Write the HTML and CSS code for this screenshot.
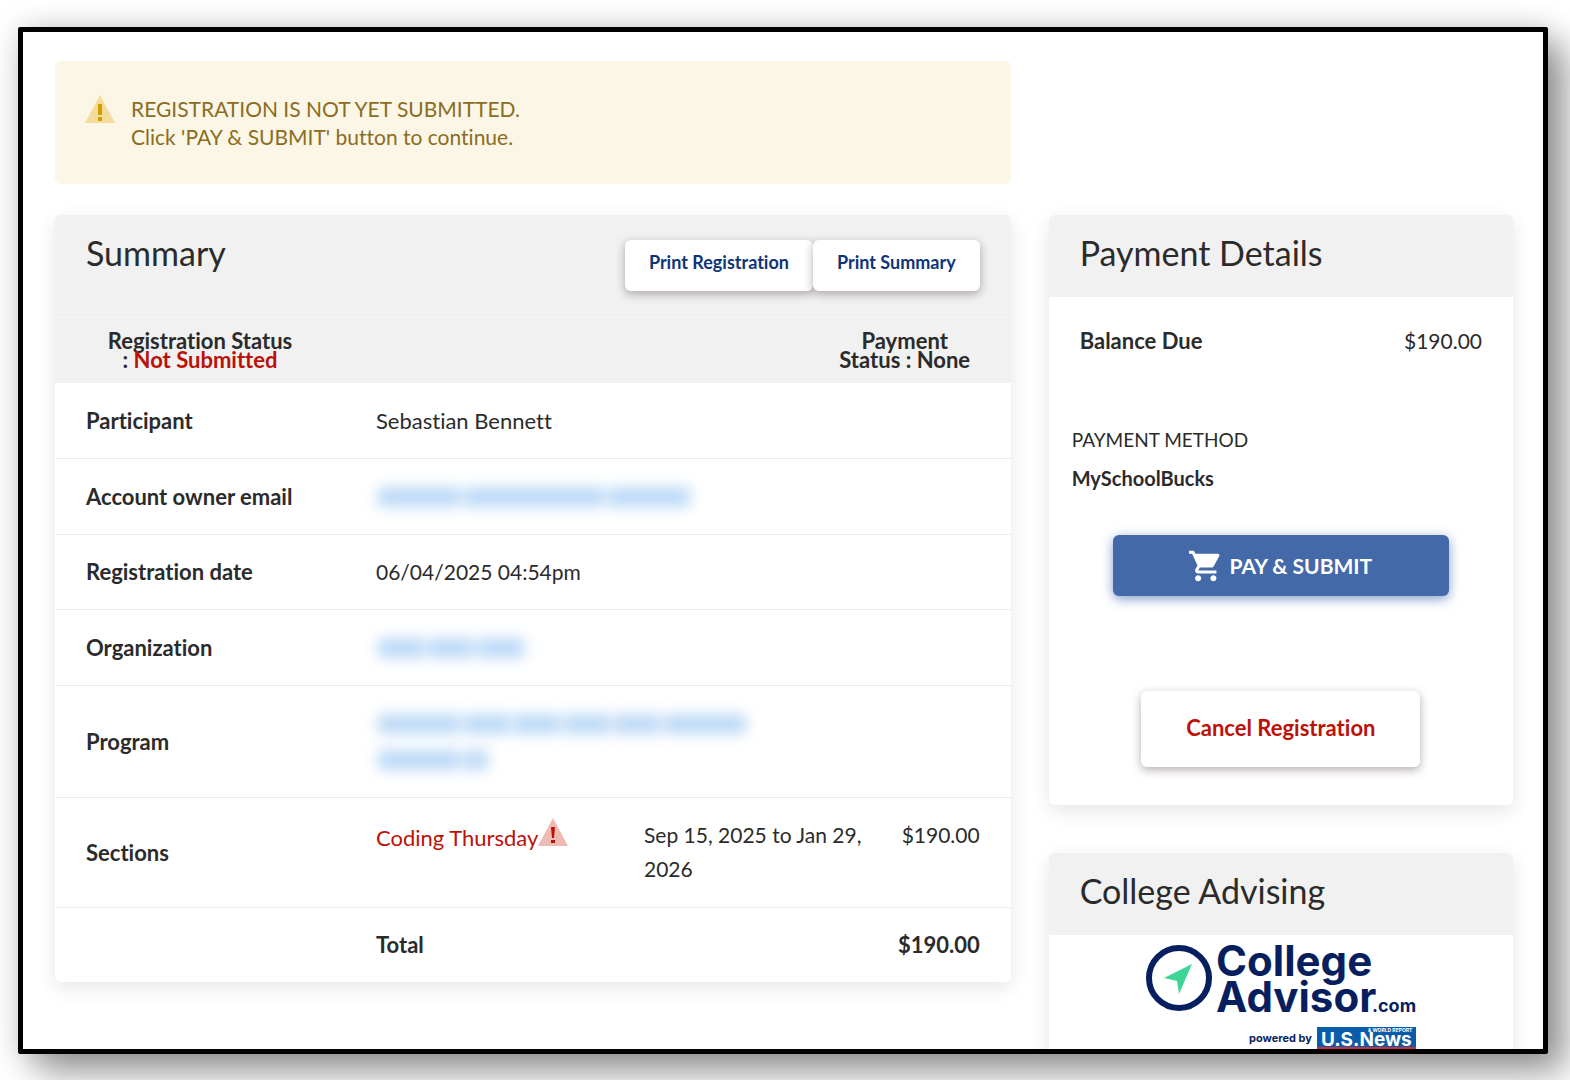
FILE: index.html
```html
<!DOCTYPE html>
<html lang="en">
<head>
    <meta charset="UTF-8">
    <meta name="viewport" content="width=device-width, initial-scale=1.0">
    <title>Registration Summary</title>
    <link rel="stylesheet" href="styles.css">
</head>
<body>
    <div class="frame">
        <div class="alert" role="alert">
            <svg class="warning-icon" viewBox="0 0 30 28" width="30" height="28" aria-hidden="true">
                <path class="warning-shape" d="M15 0L30 28H0z"/>
                <path class="warning-mark" d="M13 9h4v11h-4zM13 22h4v4h-4z"/>
            </svg>
            <p>REGISTRATION IS NOT YET SUBMITTED.<br>Click 'PAY &amp; SUBMIT' button to continue.</p>
        </div>

        <main class="card summary">
            <div class="card-header summary-header">
                <h2>Summary</h2>
                <div class="print-buttons">
                    <button type="button" class="btn btn-print">Print Registration</button>
                    <button type="button" class="btn btn-print">Print Summary</button>
                </div>
            </div>
            <div class="status-row">
                <div class="status status-registration">Registration Status : <span class="red">Not Submitted</span></div>
                <div class="status status-payment">Payment Status : None</div>
            </div>
            <table class="summary-table">
                <colgroup>
                    <col class="col-label">
                    <col class="col-name">
                    <col class="col-dates">
                    <col class="col-price">
                </colgroup>
                <tbody>
                    <tr>
                        <th scope="row">Participant</th>
                        <td colspan="3">Sebastian Bennett</td>
                    </tr>
                    <tr>
                        <th scope="row">Account owner email</th>
                        <td colspan="3"><div class="hidden-line"><i class="w80"></i><i class="w140"></i><i class="w80"></i></div></td>
                    </tr>
                    <tr>
                        <th scope="row">Registration date</th>
                        <td colspan="3" class="num">06/04/2025 04:54pm</td>
                    </tr>
                    <tr>
                        <th scope="row">Organization</th>
                        <td colspan="3"><div class="hidden-line"><i class="w44"></i><i class="w44"></i><i class="w44"></i></div></td>
                    </tr>
                    <tr class="tall">
                        <th scope="row">Program</th>
                        <td colspan="3">
                            <div class="hidden-line"><i class="w80"></i><i class="w44"></i><i class="w44"></i><i class="w44"></i><i class="w44"></i><i class="w80"></i></div>
                            <div class="hidden-line"><i class="w80"></i><i class="w20"></i></div>
                        </td>
                    </tr>
                    <tr class="tall">
                        <th scope="row">Sections</th>
                        <td class="top"><a href="#" class="section-link">Coding Thursday<svg class="warning-icon warning-red" viewBox="0 0 30 28" width="30" height="28" aria-hidden="true"><path class="warning-shape" d="M15 0L30 28H0z"/><path class="warning-mark" d="M13 9h4l-1 11h-2zM13 22h4v3h-4z"/></svg></a></td>
                        <td class="top num dates">Sep 15, 2025 to Jan 29, 2026</td>
                        <td class="top num price">$190.00</td>
                    </tr>
                    <tr class="total">
                        <td></td>
                        <td>Total</td>
                        <td></td>
                        <td class="price">$190.00</td>
                    </tr>
                </tbody>
            </table>
        </main>

        <aside class="sidebar">
            <section class="card">
                <div class="card-header">
                    <h2>Payment Details</h2>
                </div>
                <div class="balance">
                    <strong>Balance Due</strong>
                    <span class="num">$190.00</span>
                </div>
                <div class="method">
                    <div class="method-label">PAYMENT METHOD</div>
                    <strong>MySchoolBucks</strong>
                </div>
                <div class="actions">
                    <button type="button" class="btn btn-pay">
                        <svg viewBox="1 2 21 20" width="32" height="32" fill="currentColor" aria-hidden="true">
                            <path d="M7 18c-1.1 0-1.99.9-1.99 2S5.9 22 7 22s2-.9 2-2-.9-2-2-2zM1 2v2h2l3.6 7.59-1.35 2.45c-.16.28-.25.61-.25.96 0 1.1.9 2 2 2h12v-2H7.42c-.14 0-.25-.11-.25-.25l.03-.12.9-1.63h7.45c.75 0 1.41-.41 1.75-1.03l3.58-6.49A1 1 0 0 0 20 4H5.21l-.94-2H1zm16 16c-1.1 0-1.99.9-1.99 2s.89 2 1.99 2 2-.9 2-2-.9-2-2-2z"/>
                        </svg>
                        PAY &amp; SUBMIT
                    </button>
                    <button type="button" class="btn btn-cancel">Cancel Registration</button>
                </div>
            </section>

            <section class="card">
                <div class="card-header">
                    <h2>College Advising</h2>
                </div>
                <a href="#" class="advisor" aria-label="CollegeAdvisor.com">
                    <svg class="advisor-logo" viewBox="0 0 270 120" width="270" height="120">
                        <circle class="ring" cx="33" cy="34" r="30"/>
                        <path class="arrow" d="M46 20L33 50l-2-13-13-3z"/>
                        <text class="logo-big" x="70" y="32">College</text>
                        <text class="logo-big" x="70" y="68">Advisor</text>
                        <text class="logo-com" x="226" y="68">.com</text>
                        <text class="logo-powered" x="103" y="98">powered by</text>
                        <rect class="news-box" x="171" y="83" width="99" height="26"/>
                        <text class="news-text" x="175" y="102">U.S.News</text>
                        <text class="news-small" x="222" y="88">&amp; WORLD REPORT</text>
                        <rect class="news-line" x="171" y="103" width="99" height="3"/>
                    </svg>
                </a>
            </section>
        </aside>
    </div>
</body>
</html>
```

FILE: styles.css
```css
* {
    box-sizing: border-box;
}

body {
    margin: 0;
    padding: 27px 22px 26px 18px;
    height: 100vh;
    overflow: hidden;
    font-family: Lato, "Open Sans", sans-serif;
    font-size: 22px;
    font-variant-ligatures: none;
    line-height: 34px;
    color: #2b2b2b;
    background-color: #fff;
}

h2, p {
    margin: 0;
}

h2 {
    font-size: 34px;
    font-weight: 400;
    line-height: 40px;
}

.frame {
    height: 100%;
    overflow: hidden;
    border: 5px solid #000;
    border-radius: 2px;
    background-color: #fff;
    padding: 29px 30px 0 32px;
    display: grid;
    grid-template-columns: 955fr 464fr;
    grid-template-rows: auto 1fr;
    gap: 31px 38px;
    box-shadow: 0 0 30px rgba(0, 0, 0, 0.15), 18px 18px 36px rgba(0, 0, 0, 0.4);
}

.alert {
    display: flex;
    gap: 16px;
    padding: 34px 30px 33px;
    border-radius: 6px;
    background-color: #fcf6e6;
    color: #8a6d1f;
    font-size: 21px;
    line-height: 28px;
}

.warning-icon {
    flex: none;
}

.warning-shape {
    fill: #f5dc9c;
}

.warning-mark {
    fill: #d39e00;
}

.warning-red .warning-shape {
    fill: #eebbb4;
}

.warning-red .warning-mark {
    fill: #bb1107;
}

.card {
    border-radius: 6px;
    background-color: #fff;
    box-shadow: 0 6px 20px rgba(0, 0, 0, 0.1);
}

.card-header {
    padding: 18px 31px 24px;
    border-radius: 6px 6px 0 0;
    background-color: #f1f1f1;
}

.summary {
    grid-row: 2;
    align-self: start;
}

.summary-header {
    display: flex;
    justify-content: space-between;
    padding-bottom: 26px;
}

.sidebar {
    grid-row: 2;
    grid-column: 2;
    display: flex;
    flex-direction: column;
    gap: 48px;
}

.print-buttons {
    display: flex;
    padding-top: 7px;
}

.btn {
    border: none;
    border-radius: 6px;
    background-color: #fff;
    font-family: inherit;
    font-variant-ligatures: none;
    font-weight: 700;
    cursor: pointer;
    box-shadow: 0 3px 10px rgba(40, 20, 40, 0.35);
}

.btn-print {
    padding: 10px 24px 17px;
    font-size: 18px;
    line-height: 24px;
    color: #0f3478;
}

.status-row {
    display: flex;
    justify-content: space-between;
    padding: 13px 31px 14px;
    border-top: 1px solid #f6f6f6;
    background-color: #f1f1f1;
    font-weight: 700;
    line-height: 19px;
    text-align: center;
}

.status-registration {
    width: 228px;
    padding: 0 19px;
}

.status-payment {
    width: 150px;
}

.red {
    color: #bb1107;
}

.num {
    font-size: 21px;
}

.summary-table {
    width: 100%;
    table-layout: fixed;
    border-collapse: collapse;
}

.col-label {
    width: 306px;
}

.col-name {
    width: 268px;
}

.col-price {
    width: 125px;
}

.summary-table th,
.summary-table td {
    height: 75px;
    padding: 20px 15px 19px;
    text-align: left;
}

.summary-table th {
    padding-left: 31px;
}

.summary-table tr + tr {
    border-top: 1px solid #ebebeb;
}

.summary-table .tall th,
.summary-table .tall td {
    height: 110px;
}

.summary-table .top {
    vertical-align: top;
}

.summary-table .dates {
    padding-right: 0;
}

.summary-table .price {
    padding-right: 31px;
    padding-left: 0;
    text-align: right;
}

.total {
    font-weight: 700;
}

.section-link {
    color: #bb1107;
    text-decoration: none;
    white-space: nowrap;
}

/* blurred private values */
.hidden-line {
    display: flex;
    align-items: center;
    gap: 4px;
    height: 36px;
    padding-left: 2px;
    filter: blur(7px);
}

.hidden-line i {
    height: 20px;
    background-color: #bcd9f6;
}

.w20 { width: 24px; }
.w44 { width: 46px; }
.w80 { width: 82px; }
.w140 { width: 140px; }

.balance {
    display: flex;
    justify-content: space-between;
    padding: 27px 31px;
}

.method {
    padding: 36px 23px 0;
    font-size: 20px;
    line-height: 38px;
}

.method-label {
    font-size: 19px;
}

.actions {
    display: flex;
    flex-direction: column;
    align-items: center;
    padding: 38px 64px;
    gap: 95px;
}

.btn-pay {
    display: flex;
    align-items: center;
    justify-content: center;
    gap: 8px;
    width: 100%;
    height: 61px;
    font-size: 21px;
    color: #fff;
    background-color: #4369a8;
    box-shadow: 0 3px 12px rgba(50, 90, 170, 0.6);
}

.btn-cancel {
    padding: 20px 45px 22px;
    font-size: 22px;
    line-height: 34px;
    color: #bb1107;
}

.advisor {
    display: flex;
    justify-content: center;
    padding: 9px 0;
}

.advisor-logo {
    overflow: visible;
    font-family: Inter, sans-serif;
    font-weight: 700;
    fill: #071f5f;
}

.ring {
    fill: none;
    stroke: #071f5f;
    stroke-width: 6px;
}

.arrow {
    fill: #3dd598;
}

.logo-big {
    font-size: 42px;
}

.logo-com {
    font-size: 18px;
}

.logo-powered {
    font-size: 11px;
}

.news-box {
    fill: #0a5ba8;
}

.news-text {
    font-size: 19px;
    fill: #fff;
}

.news-small {
    font-size: 5px;
    fill: #fff;
}

.news-line {
    fill: #c9303e;
}
```
